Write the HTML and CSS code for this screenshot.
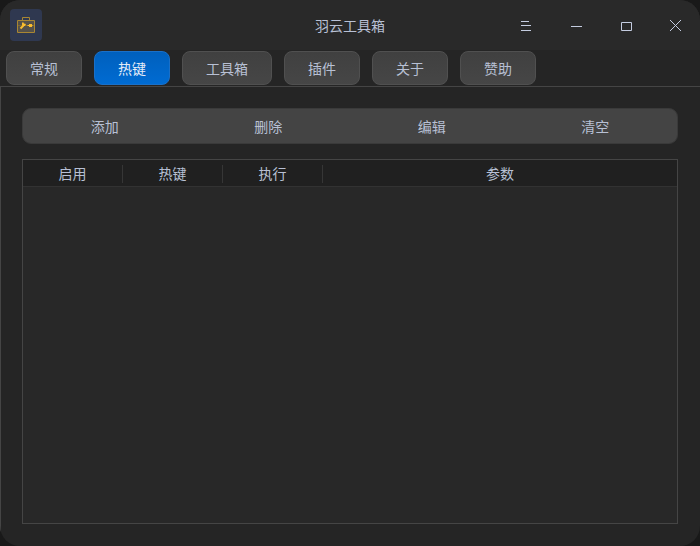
FILE: index.html
```html
<!DOCTYPE html>
<html lang="zh-CN">
<head>
<meta charset="utf-8">
<meta name="viewport" content="width=device-width, initial-scale=1">
<title>羽云工具箱</title>
<link rel="stylesheet" href="styles.css">
</head>
<body>
<div class="window">
  <header class="titlebar">
    <div class="app-icon">
      <svg width="32" height="32" viewBox="0 0 32 32" fill="none" aria-hidden="true">
        <rect x="8" y="12" width="16" height="11" fill="#55514a"/>
        <path d="M7.500 11.500h17v12h-17z" stroke="#a98632"/>
        <path d="M12.500 11V8.500h7V11" stroke="#a98632"/>
        <path d="M8 16.500h16" stroke="#80692f"/>
        <path d="M10.500 19.500l3-3" stroke="#fabd2f" stroke-width="2"/>
        <path d="M12 14l1-1 1 1.500 2 .5-1 2h-2l-1-1z" fill="#fabd2f"/>
        <path d="M17.500 16.500h5" stroke="#fabd2f"/>
        <rect x="19" y="15" width="3" height="3" fill="#fabd2f"/>
      </svg>
    </div>
    <h1 class="title">羽云工具箱</h1>
    <div class="controls">
      <button class="control" type="button" aria-label="菜单"><svg width="16" height="16" viewBox="0 0 16 16"><path d="M4 4.500h8M4 8.500h10M4 13.500h10"/></svg></button>
      <button class="control" type="button" aria-label="最小化"><svg width="16" height="16" viewBox="0 0 16 16"><path d="M4 9.500h11"/></svg></button>
      <button class="control" type="button" aria-label="最大化"><svg width="16" height="16" viewBox="0 0 16 16"><path d="M4.500 5.500h10v8h-10z"/></svg></button>
      <button class="control" type="button" aria-label="关闭"><svg width="16" height="16" viewBox="0 0 16 16"><path d="M3 3l11 11M14 3L3 14"/></svg></button>
    </div>
  </header>
  <nav class="tabs">
    <button class="tab" type="button">常规</button>
    <button class="tab active" type="button" aria-current="page">热键</button>
    <button class="tab" type="button">工具箱</button>
    <button class="tab" type="button">插件</button>
    <button class="tab" type="button">关于</button>
    <button class="tab" type="button">赞助</button>
  </nav>
  <main class="panel">
    <div class="toolbar">
      <button class="action" type="button">添加</button>
      <button class="action" type="button">删除</button>
      <button class="action" type="button">编辑</button>
      <button class="action" type="button">清空</button>
    </div>
    <div class="list">
      <table class="hotkeys">
        <thead>
          <tr>
            <th class="narrow" scope="col"><span>启用</span></th>
            <th class="narrow" scope="col"><span>热键</span></th>
            <th class="narrow" scope="col"><span>执行</span></th>
            <th scope="col"><span>参数</span></th>
          </tr>
        </thead>
        <tbody></tbody>
      </table>
    </div>
  </main>
</div>
</body>
</html>
```
FILE: styles.css
```css
* {
  box-sizing: border-box;
}

body {
  margin: 0;
  background: #191919;
  color: #b8c0d4;
  font: 14px/20px "Noto Sans CJK SC", sans-serif;
}

button {
  margin: 0;
  padding: 0;
  border: 0;
  background: none;
  color: inherit;
  font: inherit;
}

.window {
  display: flex;
  flex-direction: column;
  min-height: 100vh;
  overflow: hidden;
  border-radius: 20px;
  background: #252525;
}

.titlebar {
  display: grid;
  grid-template-columns: 1fr auto 1fr;
  align-items: center;
  height: 50px;
  background: #292929;
}

.app-icon {
  width: 32px;
  height: 32px;
  margin-left: 10px;
  border-radius: 4px;
  background: #2f3850;
}

.app-icon svg {
  display: block;
}

.title {
  margin: 0;
  font-size: 14px;
  font-weight: 400;
}

.controls {
  display: flex;
  justify-content: flex-end;
}

.control {
  display: grid;
  place-items: center;
  width: 50px;
  height: 50px;
}

.control svg {
  fill: none;
  stroke: #c4cce0;
}

.tabs {
  display: flex;
  gap: 12px;
  padding: 1px 6px;
}

.tab {
  height: 34px;
  padding: 0 23px;
  border: 1px solid #505050;
  border-radius: 8px;
  background: linear-gradient(#404040, #464646);
}

.tab.active {
  border-color: #1a70c8;
  background: linear-gradient(#0060bd, #006bd2);
  color: #e4ecf8;
}

.panel {
  display: flex;
  flex: 1;
  flex-direction: column;
  gap: 15px;
  padding: 21px 22px 22px 21px;
  border-top: 1px solid #454545;
  border-left: 1px solid #454545;
}

.toolbar {
  display: flex;
  height: 36px;
  border: 1px solid #3a3a3a;
  border-radius: 9px;
  background: #444;
}

.action {
  flex: 1;
}

.list {
  flex: 1;
  border: 1px solid #454545;
  background: #282828;
}

.hotkeys {
  width: 100%;
  border-spacing: 0;
  table-layout: fixed;
}

.hotkeys th {
  height: 27px;
  padding: 1px 0 0;
  border-bottom: 1px solid #323232;
  background: #202020;
  font-weight: 400;
}

.hotkeys .narrow {
  width: 100px;
}

.hotkeys span {
  display: block;
  height: 18px;
  line-height: 16px;
}

.hotkeys .narrow span {
  border-right: 1px solid #363636;
}
```
